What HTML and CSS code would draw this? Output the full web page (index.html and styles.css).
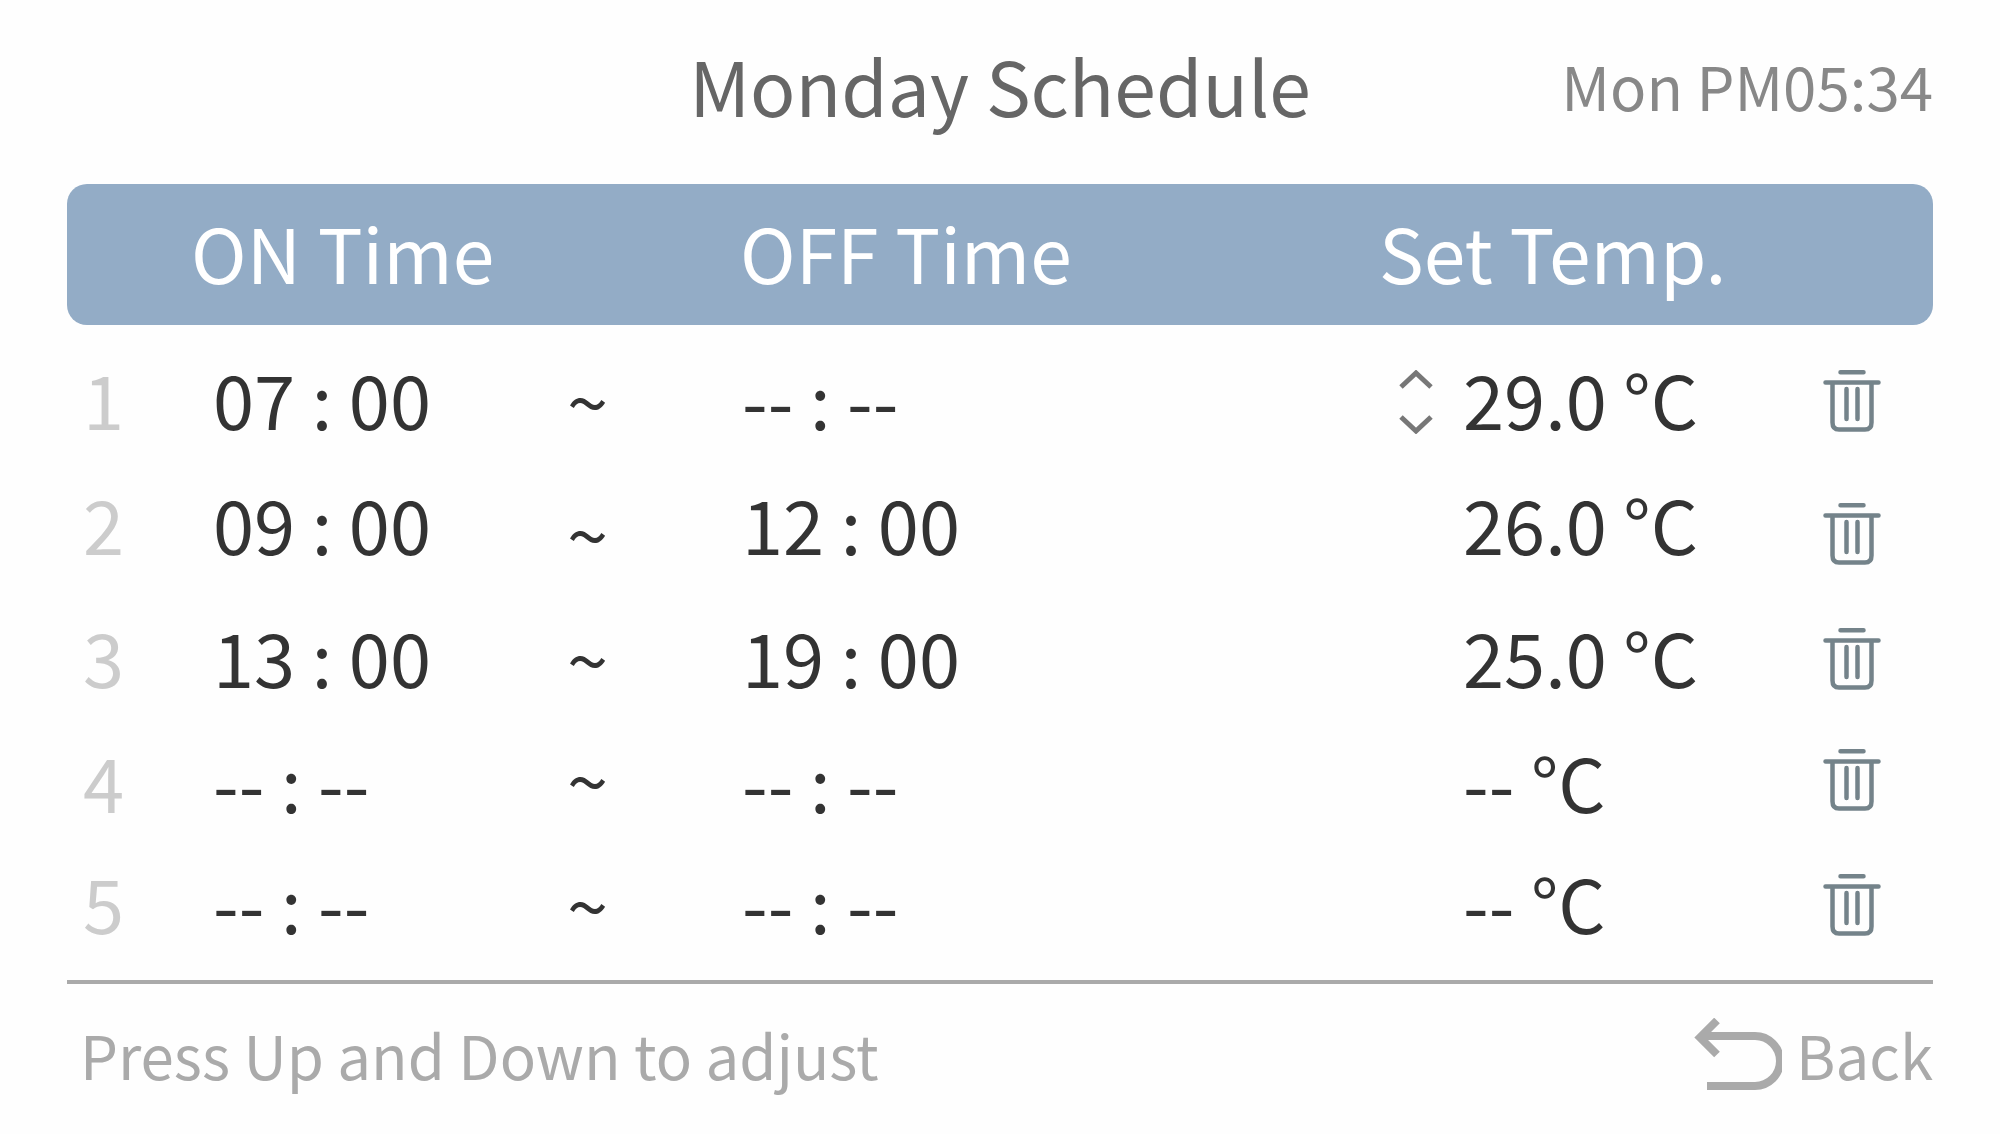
FILE: index.html
```html
<!DOCTYPE html>
<html lang="en">
<head>
<meta charset="UTF-8">
<meta name="viewport" content="width=device-width, initial-scale=1.0">
<title>Monday Schedule</title>
<link rel="stylesheet" href="styles.css">
</head>
<body>
    <!-- shared icons -->
    <svg class="icon-defs" aria-hidden="true">
        <symbol id="trash" viewBox="0 0 58 62">
            <path stroke-width="4.5" d="M17.5 2.300H40.500M2.500 12.500H55.500M9.500 12.500V52.500Q9.500 59.500 16 59.500H42Q48.500 59.500 48.500 52.500V12.500M23.500 19V49M34.500 19V49"/>
        </symbol>
    </svg>

    <header class="topbar">
        <h1>Monday Schedule</h1>
        <time class="clock">Mon PM05:34</time>
    </header>

    <main>
        <table class="schedule">
            <colgroup>
                <col class="col-no">
                <col class="col-on">
                <col class="col-to">
                <col class="col-off">
                <col class="col-temp">
                <col class="col-del">
            </colgroup>
            <thead>
                <tr>
                    <th></th>
                    <th scope="col">ON Time</th>
                    <th></th>
                    <th scope="col">OFF Time</th>
                    <th scope="col">Set Temp.</th>
                    <th></th>
                </tr>
            </thead>
            <tbody>
                <tr>
                    <td class="no">1</td>
                    <td class="on">07 : 00</td>
                    <td class="to">~</td>
                    <td class="off">-- : --</td>
                    <td>
                        <div class="temp">
                            <div class="stepper">
                                <button aria-label="Up"><svg viewBox="0 0 34 20"><path d="M2 17L17 3L32 17"/></svg></button>
                                <button aria-label="Down"><svg viewBox="0 0 34 20"><path d="M2 3L17 17L32 3"/></svg></button>
                            </div>
                            <span>29.0 °C</span>
                        </div>
                    </td>
                    <td class="del"><button aria-label="Delete 1"><svg><use href="#trash"/></svg></button></td>
                </tr>
                <tr>
                    <td class="no">2</td>
                    <td class="on">09 : 00</td>
                    <td class="to">~</td>
                    <td class="off">12 : 00</td>
                    <td><div class="temp"><div class="stepper"></div><span>26.0 °C</span></div></td>
                    <td class="del"><button aria-label="Delete 2"><svg><use href="#trash"/></svg></button></td>
                </tr>
                <tr>
                    <td class="no">3</td>
                    <td class="on">13 : 00</td>
                    <td class="to">~</td>
                    <td class="off">19 : 00</td>
                    <td><div class="temp"><div class="stepper"></div><span>25.0 °C</span></div></td>
                    <td class="del"><button aria-label="Delete 3"><svg><use href="#trash"/></svg></button></td>
                </tr>
                <tr>
                    <td class="no">4</td>
                    <td class="on">-- : --</td>
                    <td class="to">~</td>
                    <td class="off">-- : --</td>
                    <td><div class="temp"><div class="stepper"></div><span>-- °C</span></div></td>
                    <td class="del"><button aria-label="Delete 4"><svg><use href="#trash"/></svg></button></td>
                </tr>
                <tr>
                    <td class="no">5</td>
                    <td class="on">-- : --</td>
                    <td class="to">~</td>
                    <td class="off">-- : --</td>
                    <td><div class="temp"><div class="stepper"></div><span>-- °C</span></div></td>
                    <td class="del"><button aria-label="Delete 5"><svg><use href="#trash"/></svg></button></td>
                </tr>
            </tbody>
        </table>
    </main>

    <footer class="bottombar">
        <span>Press Up and Down to adjust</span>
        <button class="back">
            <svg viewBox="0 0 88 72"><path d="M23 2.500L6 19.500L23 36.500M8 18H61A25 25 0 0 1 61 68H13"/></svg>
            Back
        </button>
    </footer>
</body>
</html>
```

FILE: styles.css
```css
* {
    box-sizing: border-box;
}
body {
    margin: 0;
    padding: 0 67px;
    background: #fefefe;
    color: #333;
    font-family: "Noto Sans CJK TC", "Noto Sans", sans-serif;
    font-size: 74px;
    line-height: 80px;
}
button {
    display: block;
    padding: 0;
    border: 0;
    background: none;
    color: inherit;
    font: inherit;
    cursor: pointer;
}
svg {
    display: block;
    fill: none;
    stroke: currentColor;
}
.icon-defs {
    position: absolute;
    width: 0;
    height: 0;
}

/* title + clock */
.topbar {
    display: grid;
    grid-template-columns: 1fr auto 1fr;
    align-items: center;
    height: 184px;
    padding-bottom: 14px;
}
h1 {
    grid-column: 2;
    margin: 0;
    color: #666;
    font-size: 75px;
    font-weight: 400;
}
.clock {
    justify-self: end;
    color: #888;
    font-size: 60px;
}

/* schedule table */
.schedule {
    width: 100%;
    table-layout: fixed;
    border-collapse: separate;
    border-spacing: 0;
}
.col-no { width: 124px; }
.col-on { width: 376px; }
.col-to { width: 173px; }
.col-temp { width: 444px; }
.col-del { width: 110px; }
th {
    height: 141px;
    padding: 0 0 6px;
    background: #93acc6;
    color: #fff;
    font-size: 75px;
    font-weight: 400;
    text-align: left;
    white-space: nowrap;
}
th:first-child {
    border-radius: 20px 0 0 20px;
}
th:last-child {
    border-radius: 0 20px 20px 0;
}
tbody tr {
    height: 125px;
}
tbody tr:nth-child(2) {
    height: 133px;
}
tbody tr:nth-child(4) {
    height: 121px;
}
td {
    padding: 33px 0 0;
    vertical-align: top;
    white-space: nowrap;
}
td.no {
    padding-left: 16px;
    color: #ccc;
}
td.on {
    padding-left: 22px;
}
td.off {
    padding-left: 2px;
}
td.to {
    padding: 0 0 11px;
    vertical-align: bottom;
}
td.del {
    padding: 0 0 18px;
    vertical-align: bottom;
    color: #74838a;
}
.del svg {
    width: 58px;
    height: 62px;
    stroke-linecap: round;
}
.temp {
    display: flex;
    align-items: center;
}
.stepper {
    display: flex;
    flex-direction: column;
    gap: 24px;
    width: 84px;
    padding: 8px 0 0 20px;
    color: #777;
}
.stepper svg {
    width: 34px;
    height: 20px;
    stroke-width: 5;
}
.stepper button {
    width: 34px;
}

/* hint + back */
.bottombar {
    display: flex;
    justify-content: space-between;
    align-items: center;
    margin-top: 26px;
    padding: 30px 0 28px 13px;
    border-top: 4px solid #aaa;
    color: #aaa;
    font-size: 60px;
}
.back {
    display: flex;
    align-items: center;
    gap: 14px;
}
.back svg {
    width: 88px;
    height: 72px;
    stroke-width: 8;
}
```
